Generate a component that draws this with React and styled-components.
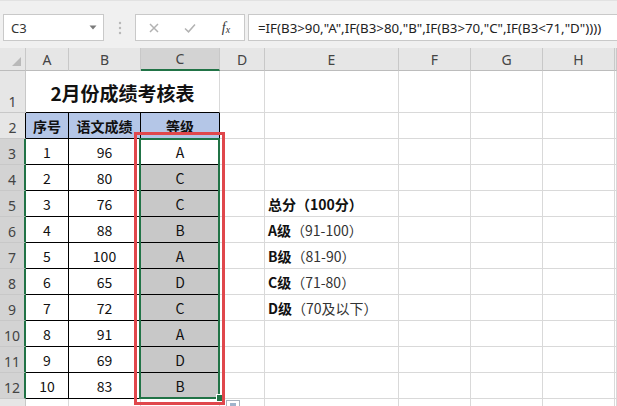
import React from "react";
import styled, { createGlobalStyle } from "styled-components";

const GlobalStyle = createGlobalStyle`
  html, body { margin: 0; padding: 0; background: #fff; }
  body { font-family: "Noto Sans", "Noto Sans CJK SC", sans-serif; }
`;

const Page = styled.div`
  width: 617px;
  height: 406px;
  overflow: hidden;
  background: #fff;
  display: flex;
  flex-direction: column;
`;

const Toolbar = styled.div`
  height: 48px;
  flex: none;
  box-sizing: border-box;
  background: #f0f0f0;
  border-top: 1px solid #e2e2e2;
  display: flex;
  align-items: flex-start;
  padding: 13px 0 0 3px;
`;

const Box = styled.div`
  box-sizing: border-box;
  height: 27px;
  background: #fff;
  border: 1px solid #c9c9c9;
  display: flex;
  align-items: center;
`;

const NameBox = styled(Box)`
  width: 101px;
  justify-content: space-between;
  padding: 0 6px 0 7px;
  font-size: 13px;
  color: #333;
`;

const Handle = styled.div`
  width: 31px;
  height: 27px;
  display: flex;
  align-items: center;
  justify-content: center;
`;

const ButtonsBox = styled(Box)`
  width: 110px;
  margin-right: 3px;
`;

const Slot = styled.div`
  width: 36px;
  display: flex;
  justify-content: center;
  align-items: center;
`;

const Fx = styled.span`
  font-family: "Liberation Serif", serif;
  font-style: italic;
  font-size: 14px;
  color: #333;
  & sub {
    font-size: 10px;
    vertical-align: -1px;
  }
`;

const FormulaBox = styled(Box)`
  flex: 1;
  border-right: none;
  padding-left: 9px;
  font-size: 13.3px;
  color: #222;
  white-space: nowrap;
`;

const SheetWrap = styled.div`
  position: relative;
  flex: 1;
`;

const Grid = styled.div`
  display: grid;
  grid-template-columns: 26px 43px 72px 79px 45px 134px 72px 72px 72px 1fr;
  grid-template-rows: 23px 42px repeat(12, 26px);
`;

const Corner = styled.div`
  position: relative;
  box-sizing: border-box;
  background: #e6e6e6;
  border-right: 1px solid #c8c8c8;
  border-bottom: 1px solid #bcbcbc;
  &::after {
    content: "";
    position: absolute;
    right: 4px;
    bottom: 4px;
    border-left: 9px solid transparent;
    border-bottom: 9px solid #b9b9b9;
  }
`;

const ColHead = styled.div`
  box-sizing: border-box;
  background: ${(p) => (p.$sel ? "#d3d3d3" : "#e6e6e6")};
  border-right: 1px solid #c8c8c8;
  border-bottom: ${(p) => (p.$sel ? "2px solid #217346" : "1px solid #bcbcbc")};
  display: flex;
  align-items: center;
  justify-content: center;
  font-size: 14px;
  color: #444;
`;

const RowHead = styled.div`
  box-sizing: border-box;
  background: ${(p) => (p.$sel ? "#d3d3d3" : "#e6e6e6")};
  border-bottom: 1px solid #c8c8c8;
  border-right: ${(p) => p.$edge};
  display: flex;
  align-items: flex-end;
  justify-content: center;
  padding-bottom: 1px;
  font-size: 14px;
  line-height: 19px;
  color: #444;
`;

const Cell = styled.div`
  box-sizing: border-box;
  border-right: 1px solid ${(p) => p.$line || "#d9d9d9"};
  border-bottom: 1px solid ${(p) => p.$line || "#d9d9d9"};
  background: ${(p) => p.$fill || "#fff"};
  display: flex;
  align-items: center;
  justify-content: ${(p) => (p.$left ? "flex-start" : "center")};
  padding-left: ${(p) => (p.$left ? "3px" : "0")};
  font-family: "Noto Sans CJK SC", "Noto Sans", sans-serif;
  font-size: 14px;
  font-weight: ${(p) => (p.$bold ? 700 : 400)};
  color: #111;
  white-space: nowrap;
`;

const TitleCell = styled(Cell)`
  grid-column: span 3;
  border-bottom-color: #000;
  font-size: 19px;
  font-weight: 700;
  padding-top: 2px;
`;

const Note = styled.span`
  font-weight: ${(p) => (p.$bold ? 700 : 400)};
  color: ${(p) => (p.$bold ? "#111" : "#333")};
`;

const Selection = styled.div`
  position: absolute;
  left: 139px;
  top: 90px;
  width: 81px;
  height: 261px;
  box-sizing: border-box;
  border: 2px solid #217346;
  pointer-events: none;
`;

const FillHandle = styled.div`
  position: absolute;
  left: 216px;
  top: 346px;
  width: 6px;
  height: 6px;
  background: #217346;
  border: 1px solid #fff;
`;

const Annotation = styled.div`
  position: absolute;
  left: 134px;
  top: 84px;
  width: 91px;
  height: 273px;
  box-sizing: border-box;
  border: 3px solid #e0474c;
  pointer-events: none;
`;

const PasteIcon = styled.div`
  position: absolute;
  left: 226px;
  top: 352px;
  width: 14px;
  height: 12px;
  box-sizing: border-box;
  background: #fff;
  border: 1px solid #a9b3bf;
  &::after {
    content: "";
    position: absolute;
    left: 3px;
    top: 2px;
    width: 6px;
    height: 3px;
    background: #9fb4cc;
  }
`;

const COLS = ["A", "B", "C", "D", "E", "F", "G", "H"];

const DATA = [
  [1, 96, "A"],
  [2, 80, "C"],
  [3, 76, "C"],
  [4, 88, "B"],
  [5, 100, "A"],
  [6, 65, "D"],
  [7, 72, "C"],
  [8, 91, "A"],
  [9, 69, "D"],
  [10, 83, "B"],
];

const NOTES = {
  5: [["总分（100分）", true]],
  6: [["A级", true], ["（91-100）", false]],
  7: [["B级", true], ["（81-90）", false]],
  8: [["C级", true], ["（71-80）", false]],
  9: [["D级", true], ["（70及以下）", false]],
};

const GREEN_EDGE = "2px solid #217346";

function Row({ r }) {
  const sel = r >= 3 && r <= 12;
  let edge = "1px solid #c8c8c8";
  if (sel) edge = GREEN_EDGE;
  else if (r === 2) edge = "1px solid #000";
  const head = (
    <RowHead $sel={sel} $edge={edge}>
      {r}
    </RowHead>
  );
  const rest = (
    <>
      <Cell />
      <Cell $left>
        {(NOTES[r] || []).map(([t, b], i) => (
          <Note key={i} $bold={b}>
            {t}
          </Note>
        ))}
      </Cell>
      <Cell />
      <Cell />
      <Cell />
      <Cell />
    </>
  );
  if (r === 1) {
    return (
      <>
        {head}
        <TitleCell>2月份成绩考核表</TitleCell>
        {rest}
      </>
    );
  }
  if (r === 2) {
    return (
      <>
        {head}
        {["序号", "语文成绩", "等级"].map((t) => (
          <Cell key={t} $line="#000" $fill="#b4c6e7" $bold>
            {t}
          </Cell>
        ))}
        {rest}
      </>
    );
  }
  if (r === 13) {
    return (
      <>
        {head}
        <Cell />
        <Cell />
        <Cell />
        {rest}
      </>
    );
  }
  const [n, s, g] = DATA[r - 3];
  return (
    <>
      {head}
      <Cell $line="#000">{n}</Cell>
      <Cell $line="#000">{s}</Cell>
      <Cell $line="#000" $fill={r === 3 ? "#fff" : "#c8c8c8"}>
        {g}
      </Cell>
      {rest}
    </>
  );
}

export default function App() {
  const rows = Array.from({ length: 13 }, (_, i) => i + 1);
  return (
    <Page>
      <GlobalStyle />
      <Toolbar>
        <NameBox>
          <span>C3</span>
          <svg width="8" height="5" viewBox="0 0 8 5">
            <path d="M0.5 0.5H7.5L4 4.5Z" fill="#7a7a7a" />
          </svg>
        </NameBox>
        <Handle>
          <svg width="4" height="14" viewBox="0 0 4 14">
            <circle cx="2" cy="2" r="1.2" fill="#b8b8b8" />
            <circle cx="2" cy="7" r="1.2" fill="#b8b8b8" />
            <circle cx="2" cy="12" r="1.2" fill="#b8b8b8" />
          </svg>
        </Handle>
        <ButtonsBox>
          <Slot>
            <svg width="10" height="10" viewBox="0 0 10 10">
              <path d="M1 1L9 9M9 1L1 9" stroke="#b2b2b2" strokeWidth="1.5" />
            </svg>
          </Slot>
          <Slot>
            <svg width="12" height="10" viewBox="0 0 12 10">
              <path d="M1 5.5L4.5 8.8L11 1.5" stroke="#b2b2b2" strokeWidth="1.5" fill="none" />
            </svg>
          </Slot>
          <Slot>
            <Fx>
              f<sub>x</sub>
            </Fx>
          </Slot>
        </ButtonsBox>
        <FormulaBox>=IF(B3&gt;90,"A",IF(B3&gt;80,"B",IF(B3&gt;70,"C",IF(B3&lt;71,"D"))))</FormulaBox>
      </Toolbar>
      <SheetWrap>
        <Grid>
          <Corner />
          {COLS.map((c) => (
            <ColHead key={c} $sel={c === "C"}>
              {c}
            </ColHead>
          ))}
          <ColHead />
          {rows.map((r) => (
            <Row key={r} r={r} />
          ))}
        </Grid>
        <Selection />
        <FillHandle />
        <Annotation />
        <PasteIcon />
      </SheetWrap>
    </Page>
  );
}
